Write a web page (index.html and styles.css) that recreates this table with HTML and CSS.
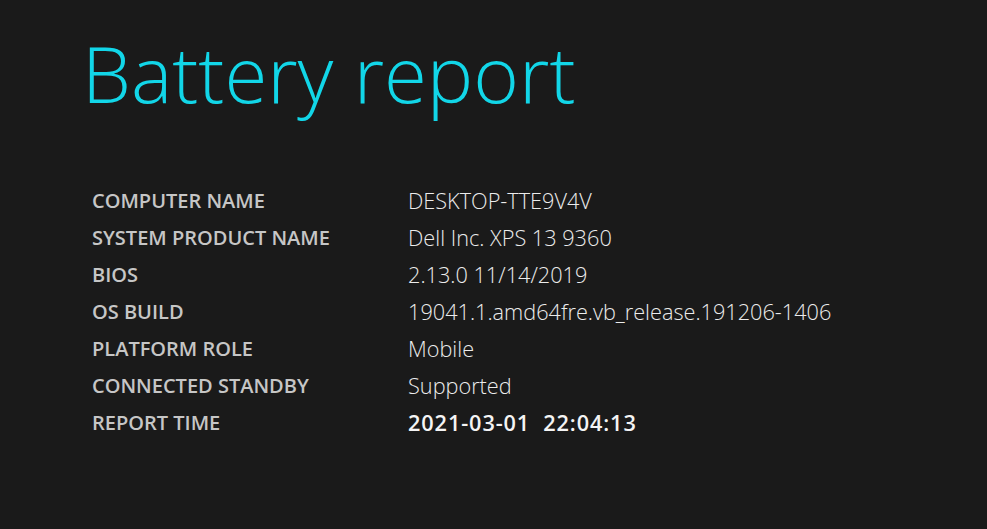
FILE: index.html
```html
<!DOCTYPE html>
<html>
<head>
<meta charset="utf-8">
<link rel="stylesheet" href="styles.css">
</head>
<body>
<main class="page">
  <h1 class="title">Battery report</h1>
  <div class="info">
    <div class="label">Computer name</div><div class="value">DESKTOP-TTE9V4V</div>
    <div class="label">System product name</div><div class="value">Dell Inc. XPS 13 9360</div>
    <div class="label">BIOS</div><div class="value">2.13.0 11/14/2019</div>
    <div class="label">OS build</div><div class="value">19041.1.amd64fre.vb_release.191206-1406</div>
    <div class="label">Platform role</div><div class="value">Mobile</div>
    <div class="label">Connected standby</div><div class="value">Supported</div>
    <div class="label">Report time</div><div class="value strong">2021-03-01&nbsp; 22:04:13</div>
  </div>
</main>
</body>
</html>
```
FILE: styles.css
```css
html, body {
  margin: 0;
  padding: 0;
  background: #1a1a1a;
  height: 100%;
}
.page {
  padding: 18px 0 0 82px;
  font-family: "Open Sans", "Noto Sans", sans-serif;
}
.title {
  margin: 0;
  font-family: "Open Sans", sans-serif;
  font-weight: 350;
  font-size: 78px;
  line-height: 110px;
  color: #12d6e8;
}
.info {
  margin-top: 54px;
  margin-left: 10px;
  display: grid;
  grid-template-columns: 316px auto;
  grid-auto-rows: 37px;
  align-items: center;
}
.label {
  text-transform: uppercase;
  font-weight: 600;
  font-size: 20px;
  color: #c6c6c6;
}
.value {
  font-weight: 300;
  font-size: 21.7px;
  color: #ececec;
}
.value.strong {
  font-weight: 600;
  letter-spacing: 0.9px;
  color: #f4f4f4;
}
```
